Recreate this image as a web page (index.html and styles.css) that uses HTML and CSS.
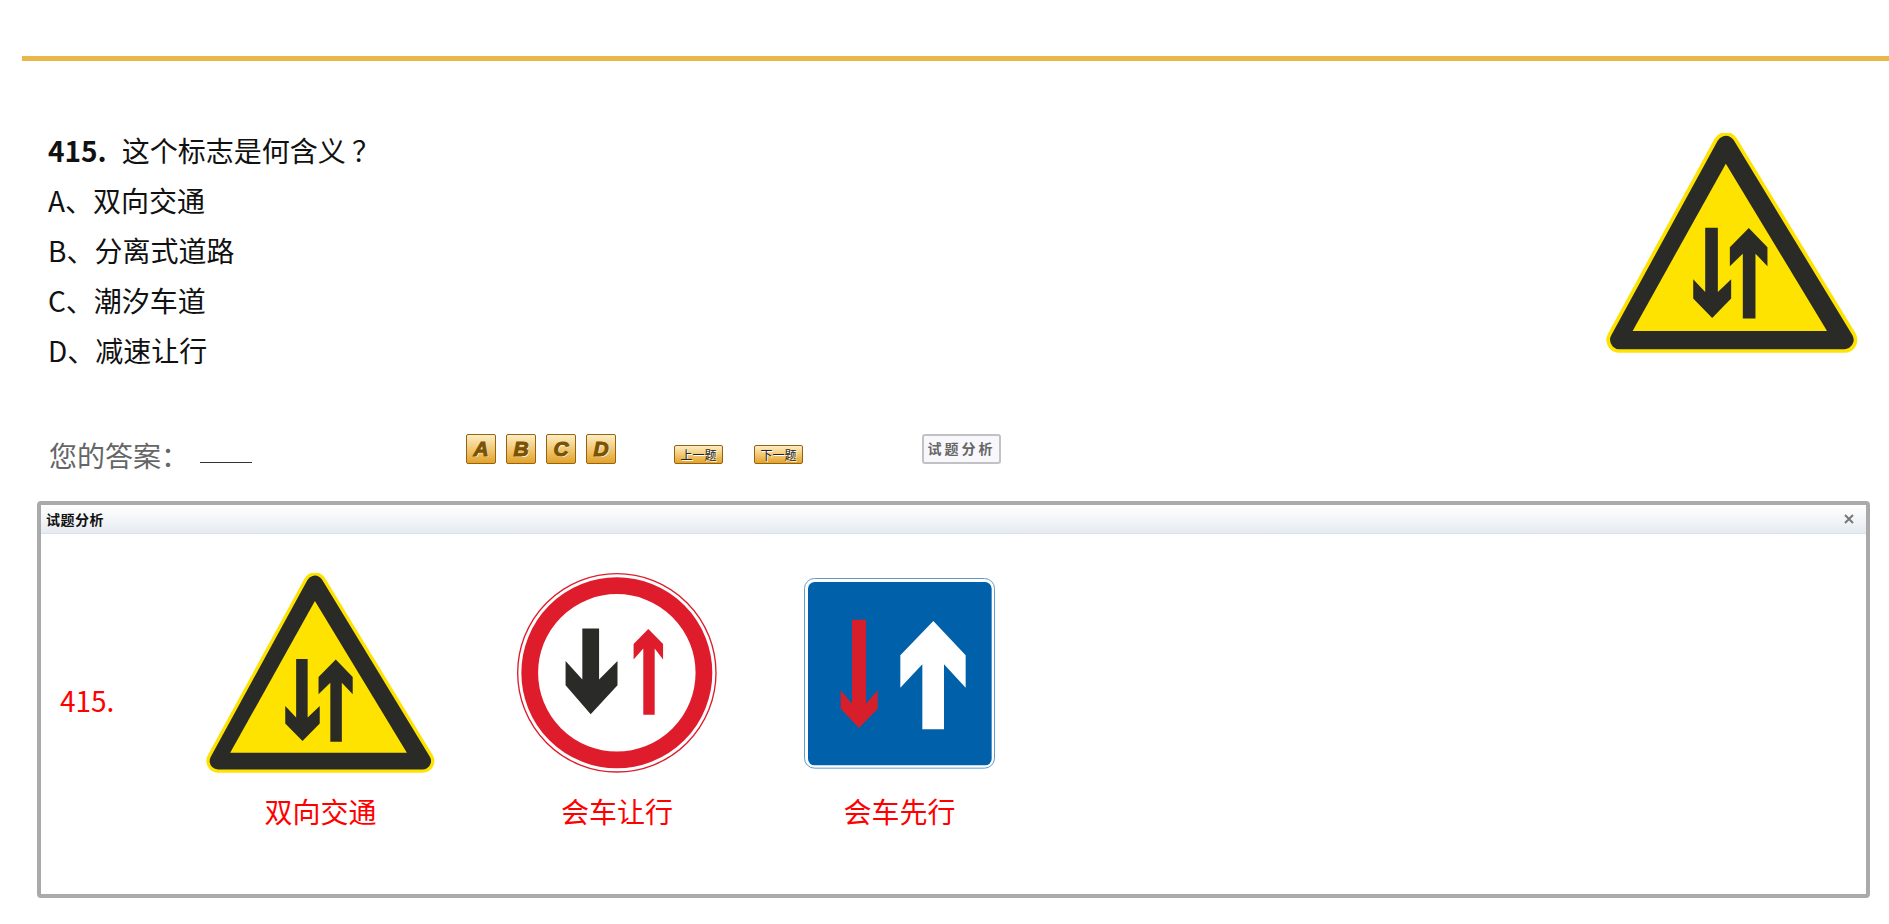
FILE: index.html
```html
<!DOCTYPE html>
<html lang="zh-CN">
<head>
    <meta charset="UTF-8">
    <meta name="viewport" content="width=device-width, initial-scale=1.0">
    <title>试题</title>
    <link rel="stylesheet" href="styles.css">
</head>
<body>
    <!-- shared sign -->
    <svg class="defs" xmlns="http://www.w3.org/2000/svg">
        <symbol id="sign-two-way" viewBox="78 68 757 660">
            <polygon points="438,104 794,689 118,689" fill="#ffe300" stroke="#ffe300" stroke-width="78" stroke-linejoin="round"/>
            <polygon points="438,104 794,689 118,689" fill="#2a2b26" stroke="#2a2b26" stroke-width="56" stroke-linejoin="round"/>
            <polygon points="438,160 742,662 158,662" fill="#ffe300"/>
            <polygon points="376,352 414,352 414,545 454,507 454,565 397,623 340,565 340,507 376,545" fill="#2a2b26"/>
            <polygon points="507,353 563,411 563,468 527,430 527,625 489,625 489,430 450,468 450,411" fill="#2a2b26"/>
        </symbol>
    </svg>

    <div class="wrapper">
        <div class="rule"></div>

        <section class="question">
            <div class="question-text">
                <p><b class="num">415.</b>这个标志是何含义 ？</p>
                <p>A、双向交通</p>
                <p>B、分离式道路</p>
                <p>C、潮汐车道</p>
                <p>D、减速让行</p>
            </div>
            <svg class="question-img"><use href="#sign-two-way"/></svg>
        </section>

        <section class="answer">
            <span class="answer-label">您的答案：</span>
            <span class="answer-blank"></span>
            <div class="opts">
                <a class="btn btn-opt">A</a>
                <a class="btn btn-opt">B</a>
                <a class="btn btn-opt">C</a>
                <a class="btn btn-opt">D</a>
            </div>
            <a class="btn btn-nav btn-prev">上一题</a>
            <a class="btn btn-nav btn-next">下一题</a>
            <a class="btn-analyze">试题分析</a>
        </section>

        <section class="panel">
            <header class="panel-title">
                <span>试题分析</span>
                <svg class="panel-close" viewBox="0 0 10 10"><path d="M1 1L9 9M9 1L1 9" stroke="#777" stroke-width="2" fill="none"/></svg>
            </header>
            <div class="panel-body">
                <div class="panel-num">415.</div>
                <figure class="sign">
                    <svg class="sign-triangle"><use href="#sign-two-way"/></svg>
                    <figcaption>双向交通</figcaption>
                </figure>
                <figure class="sign">
                    <svg class="sign-circle" viewBox="52 40 597 597">
                        <circle cx="350" cy="338" r="296" fill="#fff" stroke="#df1c2b" stroke-width="4"/>
                        <circle cx="350" cy="338" r="260" fill="#fff" stroke="#df1c2b" stroke-width="50"/>
                        <polygon points="247,206 297,206 297,358 352,303 352,375 272,462 197,375 197,303 247,358" fill="#2a2b26"/>
                        <polygon points="444,207 488,252 488,298 463,265 463,463 429,463 429,265 400,298 400,252" fill="#df1c2b"/>
                    </svg>
                    <figcaption>会车让行</figcaption>
                </figure>
                <figure class="sign">
                    <svg class="sign-square" viewBox="27 23 603 600">
                        <rect x="43.5" y="39.5" width="570" height="569" rx="30" fill="#fff" stroke="#5c9dd0" stroke-width="3"/>
                        <rect x="54" y="50" width="551" height="550" rx="20" fill="#0060a9"/>
                        <polygon points="186,163 228,163 228,415 263,375 263,430 207,488 152,430 152,375 186,415" fill="#d71f2b"/>
                        <polygon points="430,167 527,270 527,367 462,297 462,492 397,492 397,297 331,367 331,270" fill="#fff"/>
                    </svg>
                    <figcaption>会车先行</figcaption>
                </figure>
            </div>
        </section>
    </div>
</body>
</html>
```

FILE: styles.css
```css
*{box-sizing: border-box;}
body{margin:0;background:#fff;color:#111;font-family:"Noto Sans CJK SC","Noto Sans",sans-serif;}
p{margin:0;}
figure{margin:0;}

.defs{display:none;}

.wrapper{padding-top:56px;}

.rule{
    height:5px;
    margin-left:22px;
    background-color:#eab84a;
}

/* question */
.question{
    display:flex;
    justify-content:space-between;
    align-items:flex-start;
    height:315px;
    padding:0 31px 0 48px;
}
.question-text{
    padding-top:64px;
    font-size:28px;
    line-height:50px;
}
.question-text .num{margin-right:15px;}
.question-img{
    width:252px;
    height:220px;
    margin-top:72px;
}

/* answer row */
.answer{
    display:flex;
    align-items:flex-start;
    height:36px;
    margin-top:58px;
    padding-left:49px;
}
.answer-label{
    align-self:flex-end;
    width:140px;
    font-size:28px;
    line-height:30px;
    color:#666;
}
.answer-blank{
    width:52px;
    height:29px;
    margin-left:11px;
    border-bottom:1px solid #333;
}
.opts{
    display:flex;
    gap:10px;
    margin-left:214px;
}
.btn{
    display:block;
    border:1px solid #96620f;
    border-radius:2px;
    background:linear-gradient(#fdeec4,#e3a32a);
    text-align:center;
}
.btn-opt{
    width:30px;
    height:30px;
    font-family:"Liberation Sans",sans-serif;
    font-size:21px;
    font-weight:700;
    font-style:italic;
    line-height:28px;
    color:#7a5200;
    -webkit-text-stroke:1px #7a5200;
    text-shadow:1px 1px 0 #fff;
}
.btn-nav{
    width:49px;
    height:19px;
    margin-top:11px;
    font-size:12px;
    line-height:17px;
    color:#222;
    text-shadow:1px 1px 0 #fff;
}
.btn-prev{margin-left:58px;}
.btn-next{margin-left:31px;}
.btn-analyze{
    width:79px;
    height:30px;
    margin-left:119px;
    border:2px solid #c2c2c2;
    border-radius:3px;
    background:#f8f7fb;
    font-size:14px;
    font-weight:700;
    line-height:25px;
    letter-spacing:3px;
    text-align:center;
    white-space:nowrap;
    color:#666;
}

/* analysis panel */
.panel{
    height:397px;
    margin:31px 19px 0 37px;
    border:4px solid #aaa;
    border-radius:4px;
}
.panel-title{
    display:flex;
    justify-content:space-between;
    align-items:center;
    height:29px;
    padding:0 12px 0 5px;
    border-bottom:1px solid #d8e2e8;
    background:linear-gradient(#fff,#e6ebf1);
    font-size:14px;
    font-weight:700;
    letter-spacing:.5px;
    color:#111;
}
.panel-close{width:10px;height:10px;}
.panel-body{
    display:flex;
    align-items:center;
    padding:39px 0 0 19px;
}
.panel-num{
    width:146px;
    margin-bottom:4px;
    font-size:28px;
    color:#f00;
}
.sign{
    display:flex;
    flex-direction:column;
    align-items:center;
    margin-right:82px;
}
.sign svg{display:block;height:200px;}
.sign-triangle{width:229px;}
.sign-circle{width:200px;}
.sign-square{width:201px;}
.sign figcaption{
    margin-top:18px;
    font-size:28px;
    line-height:40px;
    white-space:nowrap;
    color:#f00;
}
```
